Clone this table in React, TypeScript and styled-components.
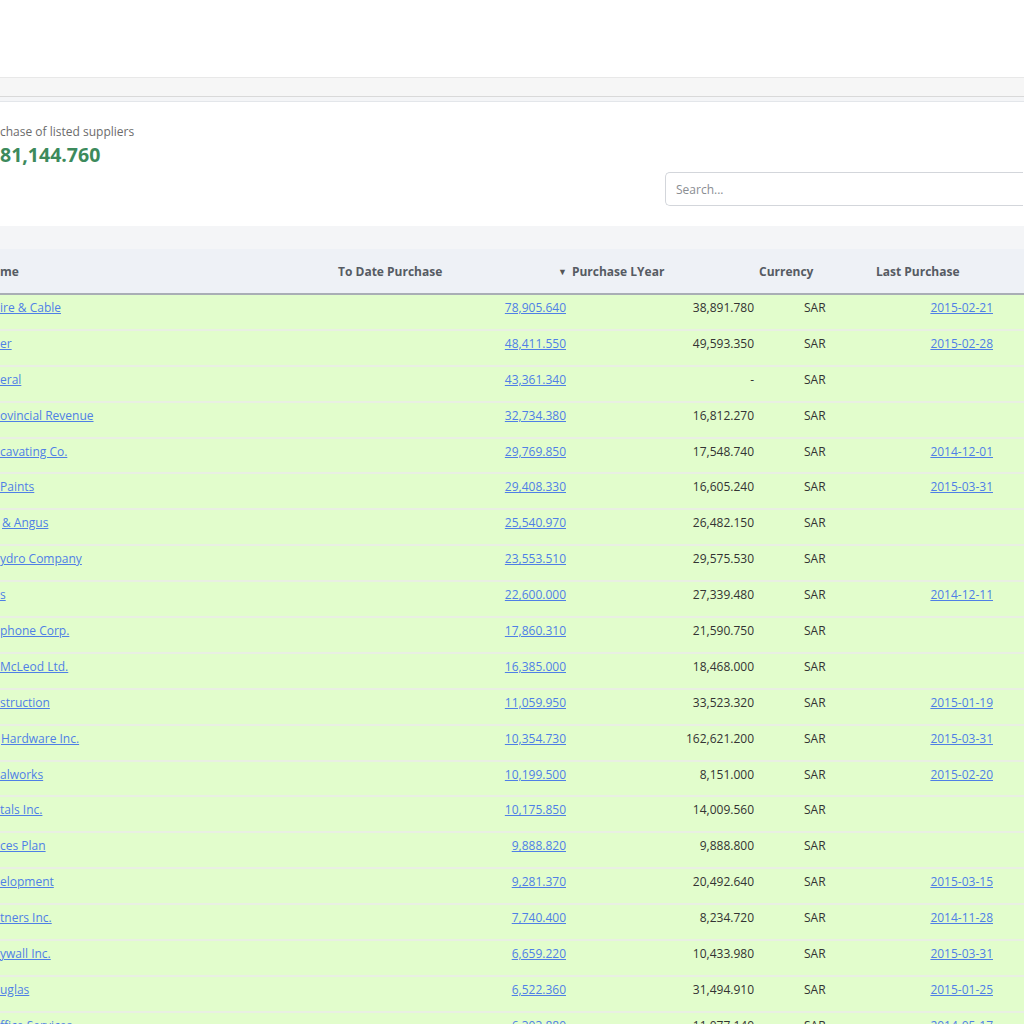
import React from "react";
import styled, { createGlobalStyle } from "styled-components";

const Global = createGlobalStyle`
  html, body {
    margin: 0;
    padding: 0;
    overflow: hidden;
    background: #f5f5f5;
    font-family: "Open Sans", "Liberation Sans", Arial, sans-serif;
  }
  * { box-sizing: border-box; }
`;

const Page = styled.div`
  width: 1024px;
  height: 1024px;
  overflow: hidden;
  display: flex;
  flex-direction: column;
`;

const TopBar = styled.div`
  height: 78px;
  flex: none;
  background: #ffffff;
  border-bottom: 1px solid #e8e8e8;
`;

const Crumbs = styled.div`
  height: 19px;
  flex: none;
  background: #f6f6f6;
  border-bottom: 1px solid #d9d9d9;
`;

const Gap = styled.div<{ $h: number }>`
  height: ${(p) => p.$h}px;
  flex: none;
  background: #f4f5f7;
`;

const Card = styled.div`
  height: 125px;
  flex: none;
  background: #ffffff;
  border-top: 1px solid #e3e6ea;
  box-shadow: 0 2px 2px rgba(0, 0, 0, 0.08);
  display: flex;
  padding: 21px 0 20px;
`;

const Summary = styled.div`
  width: 665px;
  flex: none;
  display: flex;
  flex-direction: column;
`;

const SummaryLabel = styled.div`
  font-size: 12px;
  line-height: 18px;
  color: #6c6c6c;
`;

const SummaryValue = styled.div`
  margin-top: 2px;
  font-size: 19.5px;
  line-height: 24px;
  font-weight: 700;
  color: #3d8a5c;
`;

const Search = styled.input`
  align-self: flex-end;
  width: 358px;
  height: 34px;
  flex: none;
  border: 1px solid #d3d6db;
  border-right: none;
  border-radius: 5px 0 0 5px;
  padding: 0 10px;
  font-family: "Open Sans", "Liberation Sans", Arial, sans-serif;
  font-size: 12px;
  color: #333;
  background: #fff;
  outline: none;
  &::placeholder { color: #8a8d92; }
`;

const HeadRow = styled.div`
  height: 46px;
  flex: none;
  background: #eef1f6;
  border-bottom: 2px solid #a9aeb5;
  display: grid;
  grid-template-columns: 338px 220px 201px 117px 1fr;
  align-items: center;
  font-size: 12px;
  font-weight: 700;
  color: #565b63;
  white-space: nowrap;
`;

const HeadCell = styled.div`
  display: flex;
  align-items: center;
  gap: 5px;
`;

const SortCaret = styled.span`
  font-size: 9px;
  color: #555;
  line-height: 1;
`;

const Body = styled.div`
  display: flex;
  flex-direction: column;
`;

const Row = styled.div`
  height: 35.9px;
  flex: none;
  background: #e2fdcc;
  border-bottom: 2px solid #e9efe3;
  display: grid;
  grid-template-columns: 420px 146px 188px 126px 113px 1fr;
  padding-top: 4px;
  font-size: 12px;
  line-height: 18px;
  color: #333;
  white-space: nowrap;
`;

const Cell = styled.div<{ $align?: "left" | "right"; $pl?: number }>`
  text-align: ${(p) => p.$align ?? "left"};
  padding-left: ${(p) => p.$pl ?? 0}px;
`;

const Link = styled.a<{ $shift?: number }>`
  color: #4f7fe6;
  text-decoration: underline;
  cursor: pointer;
  display: inline-block;
  margin-left: ${(p) => p.$shift ?? 0}px;
`;

type R = { name: string; shift?: number; td: string; ly: string; date?: string };

const rows: R[] = [
  { name: "ire & Cable", td: "78,905.640", ly: "38,891.780", date: "2015-02-21" },
  { name: "er", td: "48,411.550", ly: "49,593.350", date: "2015-02-28" },
  { name: "eral", td: "43,361.340", ly: "-" },
  { name: "ovincial Revenue", td: "32,734.380", ly: "16,812.270" },
  { name: "cavating Co.", td: "29,769.850", ly: "17,548.740", date: "2014-12-01" },
  { name: "Paints", td: "29,408.330", ly: "16,605.240", date: "2015-03-31" },
  { name: "& Angus", shift: 2, td: "25,540.970", ly: "26,482.150" },
  { name: "ydro Company", td: "23,553.510", ly: "29,575.530" },
  { name: "s", td: "22,600.000", ly: "27,339.480", date: "2014-12-11" },
  { name: "phone Corp.", td: "17,860.310", ly: "21,590.750" },
  { name: "McLeod Ltd.", td: "16,385.000", ly: "18,468.000" },
  { name: "struction", td: "11,059.950", ly: "33,523.320", date: "2015-01-19" },
  { name: "Hardware Inc.", shift: 1, td: "10,354.730", ly: "162,621.200", date: "2015-03-31" },
  { name: "alworks", td: "10,199.500", ly: "8,151.000", date: "2015-02-20" },
  { name: "tals Inc.", td: "10,175.850", ly: "14,009.560" },
  { name: "ces Plan", td: "9,888.820", ly: "9,888.800" },
  { name: "elopment", td: "9,281.370", ly: "20,492.640", date: "2015-03-15" },
  { name: "tners Inc.", td: "7,740.400", ly: "8,234.720", date: "2014-11-28" },
  { name: "ywall Inc.", td: "6,659.220", ly: "10,433.980", date: "2015-03-31" },
  { name: "uglas", td: "6,522.360", ly: "31,494.910", date: "2015-01-25" },
  { name: "ffice Services", td: "6,303,880", ly: "11,077.140", date: "2014-05-17" },
];

export default function App() {
  return (
    <>
      <Global />
      <Page>
        <TopBar />
        <Crumbs />
        <Gap $h={4} />
        <Card>
          <Summary>
            <SummaryLabel>chase of listed suppliers</SummaryLabel>
            <SummaryValue>81,144.760</SummaryValue>
          </Summary>
          <Search placeholder="Search..." />
        </Card>
        <Gap $h={23} />
        <HeadRow>
          <HeadCell>me</HeadCell>
          <HeadCell>To Date Purchase</HeadCell>
          <HeadCell>
            <SortCaret>▼</SortCaret>
            Purchase LYear
          </HeadCell>
          <HeadCell>Currency</HeadCell>
          <HeadCell>Last Purchase</HeadCell>
        </HeadRow>
        <Body>
          {rows.map((r, i) => (
            <Row key={i}>
              <Cell>
                <Link $shift={r.shift}>{r.name}</Link>
              </Cell>
              <Cell $align="right">
                <Link>{r.td}</Link>
              </Cell>
              <Cell $align="right">{r.ly}</Cell>
              <Cell $pl={50}>SAR</Cell>
              <Cell $align="right">{r.date ? <Link>{r.date}</Link> : null}</Cell>
              <Cell />
            </Row>
          ))}
        </Body>
      </Page>
    </>
  );
}
